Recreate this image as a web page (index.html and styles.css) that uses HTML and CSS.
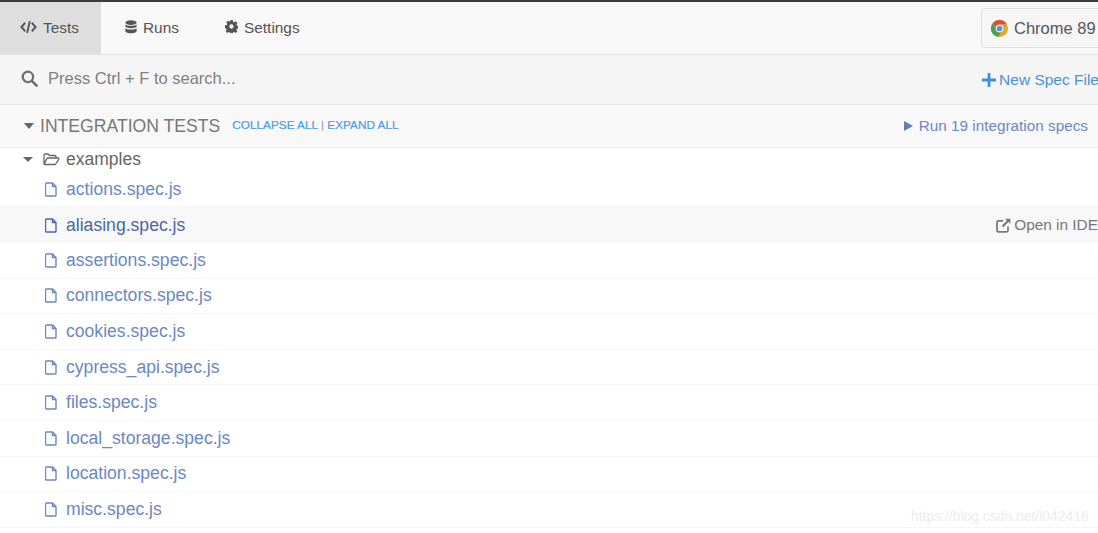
FILE: index.html
```html
<!DOCTYPE html>
<html lang="en">
<head>
<meta charset="utf-8">
<title>Cypress Tests</title>
<link rel="stylesheet" href="styles.css">
</head>
<body>
<div class="app">
  <nav class="nav">
    <a class="tab active">
      <svg class="ico-code" viewBox="0 0 18 14"><path d="M5.500 2.500 1.500 7l4 4.500M12.500 2.500l4 4.500-4 4.500M10.400 .8 7.600 13.200" fill="none" stroke="#555" stroke-width="2"/></svg>
      <span>Tests</span>
    </a>
    <a class="tab">
      <svg class="ico-db" viewBox="0 0 12 14"><ellipse cx="6" cy="2.600" rx="5.600" ry="2.400" fill="#555"/><path d="M.4 4.400C1.500 6.200 10.500 6.200 11.600 4.400v2.400C10.500 8.600 1.500 8.600.4 6.800zM.4 8.200C1.500 10 10.500 10 11.600 8.200v3.200C10.500 13.800 1.500 13.800.4 11.400z" fill="#555"/></svg>
      <span>Runs</span>
    </a>
    <a class="tab">
      <svg class="ico-gear" viewBox="0 0 14 14"><path fill-rule="evenodd" fill="#555" d="M5.700 0h2.600l.4 1.900 1.100.5 1.700-1 1.800 1.800-1 1.700.5 1.100 1.900.4v2.600l-1.900.4-.5 1.100 1 1.700-1.800 1.800-1.700-1-1.100.5-.4 1.900H5.700l-.4-1.900-1.100-.5-1.700 1-1.800-1.800 1-1.700-.5-1.100L0 8.300V5.700l1.900-.4.5-1.100-1-1.700L3.200.7l1.700 1 1.100-.5zM7 4.700a2.300 2.300 0 1 0 0 4.600 2.300 2.300 0 0 0 0-4.600z"/></svg>
      <span>Settings</span>
    </a>
    <div class="browser">
      <svg class="ico-chrome" viewBox="0 0 16 16">
        <circle cx="8" cy="8" r="8" fill="#e0a92e"/>
        <path d="M8 0a8 8 0 0 1 7 4H8a4 4 0 0 0-3.700 2.500L1.600 3.100A8 8 0 0 1 8 0z" fill="#d9503f"/>
        <path d="M1.600 3.100 4.400 8A4 4 0 0 0 9 11.900L6.900 15.900A8 8 0 0 1 1.600 3.100z" fill="#4c9f53"/>
        <circle cx="8" cy="8" r="3.600" fill="#fff"/><circle cx="8" cy="8" r="2.700" fill="#5a8fe6"/>
      </svg>
      <span>Chrome 89</span>
    </div>
  </nav>

  <div class="search">
    <svg class="ico-search" viewBox="0 0 18 18"><circle cx="7.300" cy="7.300" r="5.500" fill="none" stroke="#6f6f6f" stroke-width="2.400"/><path d="m11.500 11.500 5 5" stroke="#6f6f6f" stroke-width="2.800" stroke-linecap="round"/></svg>
    <span class="placeholder">Press Ctrl + F to search...</span>
    <a class="new-spec"><svg class="ico-plus" viewBox="0 0 14 14"><path d="M7 0v14M0 7h14" stroke="#3f8fde" stroke-width="2.800"/></svg>New Spec File</a>
  </div>

  <header class="head">
    <i class="caret caret-lg"></i>
    <span class="head-title">INTEGRATION TESTS</span>
    <span class="head-links"><a>COLLAPSE ALL</a> <em>|</em> <a>EXPAND ALL</a></span>
    <a class="run"><i class="play"></i>Run 19 integration specs</a>
  </header>

  <div class="folder">
    <i class="caret"></i>
    <svg class="ico-folder" viewBox="0 0 17 13"><path d="M1 11.500V2.200C1 1.500 1.500 1 2.200 1h3l1.300 1.500h5.300c.7 0 1.200.5 1.200 1.200V5M1 11.500h11.300l3.500-5.200c.3-.6 0-1.300-.7-1.300H5c-.5 0-.9.200-1.200.6z" fill="none" stroke="#666" stroke-width="1.300" stroke-linejoin="round"/></svg>
    <span>examples</span>
  </div>

  <ul class="specs">
    <li class="spec"><svg class="ico-file" viewBox="0 0 12 15"><path d="M1.300 1h6.200L11 4.500v8.700c0 .5-.4.800-.8.800H1.300c-.4 0-.8-.3-.8-.8V1.800c0-.5.400-.8.800-.8zM7.500 1v3.500H11" fill="none" stroke="#6c87c4" stroke-width="1.400"/></svg><a>actions.spec.js</a></li>
    <li class="spec hover"><svg class="ico-file" viewBox="0 0 12 15"><path d="M1.300 1h6.200L11 4.500v8.700c0 .5-.4.800-.8.800H1.300c-.4 0-.8-.3-.8-.8V1.800c0-.5.400-.8.800-.8zM7.500 1v3.500H11" fill="none" stroke="#4a66a8" stroke-width="1.400"/></svg><a>aliasing.spec.js</a>
      <span class="ide"><svg class="ico-ide" viewBox="0 0 15 15"><path d="M12 8.500v4c0 .8-.6 1.300-1.300 1.300H2.300c-.7 0-1.300-.5-1.300-1.300V4.200c0-.7.600-1.300 1.300-1.300H7" fill="none" stroke="#777" stroke-width="1.700"/><path d="M9 .7h5.300V6L12.400 4.100 7.300 9.300 5.700 7.700l5.200-5.100z" fill="#777"/></svg>Open in IDE</span></li>
    <li class="spec"><svg class="ico-file" viewBox="0 0 12 15"><path d="M1.300 1h6.200L11 4.500v8.700c0 .5-.4.800-.8.800H1.300c-.4 0-.8-.3-.8-.8V1.800c0-.5.400-.8.800-.8zM7.500 1v3.500H11" fill="none" stroke="#6c87c4" stroke-width="1.400"/></svg><a>assertions.spec.js</a></li>
    <li class="spec"><svg class="ico-file" viewBox="0 0 12 15"><path d="M1.300 1h6.200L11 4.500v8.700c0 .5-.4.800-.8.800H1.300c-.4 0-.8-.3-.8-.8V1.800c0-.5.400-.8.800-.8zM7.500 1v3.500H11" fill="none" stroke="#6c87c4" stroke-width="1.400"/></svg><a>connectors.spec.js</a></li>
    <li class="spec"><svg class="ico-file" viewBox="0 0 12 15"><path d="M1.300 1h6.200L11 4.500v8.700c0 .5-.4.800-.8.800H1.300c-.4 0-.8-.3-.8-.8V1.800c0-.5.400-.8.800-.8zM7.500 1v3.500H11" fill="none" stroke="#6c87c4" stroke-width="1.400"/></svg><a>cookies.spec.js</a></li>
    <li class="spec"><svg class="ico-file" viewBox="0 0 12 15"><path d="M1.300 1h6.200L11 4.500v8.700c0 .5-.4.800-.8.800H1.300c-.4 0-.8-.3-.8-.8V1.800c0-.5.400-.8.800-.8zM7.500 1v3.500H11" fill="none" stroke="#6c87c4" stroke-width="1.400"/></svg><a>cypress_api.spec.js</a></li>
    <li class="spec"><svg class="ico-file" viewBox="0 0 12 15"><path d="M1.300 1h6.200L11 4.500v8.700c0 .5-.4.800-.8.800H1.300c-.4 0-.8-.3-.8-.8V1.800c0-.5.400-.8.800-.8zM7.500 1v3.500H11" fill="none" stroke="#6c87c4" stroke-width="1.400"/></svg><a>files.spec.js</a></li>
    <li class="spec"><svg class="ico-file" viewBox="0 0 12 15"><path d="M1.300 1h6.200L11 4.500v8.700c0 .5-.4.800-.8.800H1.300c-.4 0-.8-.3-.8-.8V1.800c0-.5.400-.8.800-.8zM7.500 1v3.500H11" fill="none" stroke="#6c87c4" stroke-width="1.400"/></svg><a>local_storage.spec.js</a></li>
    <li class="spec"><svg class="ico-file" viewBox="0 0 12 15"><path d="M1.300 1h6.200L11 4.500v8.700c0 .5-.4.800-.8.800H1.300c-.4 0-.8-.3-.8-.8V1.800c0-.5.400-.8.800-.8zM7.500 1v3.500H11" fill="none" stroke="#6c87c4" stroke-width="1.400"/></svg><a>location.spec.js</a></li>
    <li class="spec"><svg class="ico-file" viewBox="0 0 12 15"><path d="M1.300 1h6.200L11 4.500v8.700c0 .5-.4.800-.8.800H1.300c-.4 0-.8-.3-.8-.8V1.800c0-.5.400-.8.800-.8zM7.500 1v3.500H11" fill="none" stroke="#6c87c4" stroke-width="1.400"/></svg><a>misc.spec.js</a></li>
  </ul>
  <div class="watermark">https://blog.csdn.net/i042416</div>
</div>
</body>
</html>
```
FILE: styles.css
```css
* { box-sizing: border-box; }
html, body { margin: 0; height: 100%; overflow: hidden; background: #fff; }
body { font-family: "Liberation Sans", Arial, sans-serif; color: #555; }
.app { position: relative; width: 1098px; height: 533px; overflow: hidden; }

.nav { display: flex; align-items: stretch; height: 55px; background: #f8f8f8; border-top: 2px solid #3a3a40; border-bottom: 1px solid #e3e3e3; }
.tab { display: flex; align-items: center; gap: 6px; font-size: 15.400px; color: #555; padding: 0 20px; height: 52px; }
.tab.active { width: 101px; background: #dedede; }
.tab:nth-child(2) { padding: 0 0 0 24px; width: 104px; }
.tab:nth-child(3) { padding: 0 0 0 20px; }
.tab svg { margin-top: -3px; }
.ico-code { width: 17px; height: 14px; }
.ico-db { width: 12px; height: 14px; }
.ico-gear { width: 13px; height: 13px; }
.browser { display: flex; align-items: center; gap: 6px; margin-left: auto; width: 118px; height: 40px; margin-top: 6px; margin-right: -1px; padding-left: 9px; font-size: 16.500px; color: #555; white-space: nowrap; background: #f6f6f6; border: 1px solid #dfdfdf; border-radius: 4px 0 0 4px; flex: none; }
.ico-chrome { width: 17px; height: 17px; flex: none; }

.search { display: flex; align-items: center; height: 50px; background: #f5f5f5; border-bottom: 1px solid #e6e6e6; padding-left: 21px; white-space: nowrap; }
.ico-search { width: 17px; height: 17px; margin-right: 10px; margin-top: -3px; }
.placeholder { font-size: 16.500px; color: #808080; margin-top: -2px; }
.new-spec { display: flex; align-items: center; gap: 3px; margin-left: auto; margin-right: -1px; font-size: 15.500px; color: #4a90dc; }
.ico-plus { width: 14px; height: 14px; }

.head { display: flex; align-items: center; height: 43px; background: #f8f8f8; border-bottom: 1px solid #efefef; padding-left: 24px; padding-right: 10px; white-space: nowrap; }
.caret { display: block; width: 0; height: 0; border-left: 5px solid transparent; border-right: 5px solid transparent; border-top: 5px solid #666; }
.caret-lg { border-left-width: 5.500px; border-right-width: 5.500px; border-top-width: 6px; }
.head-title { font-size: 17.600px; color: #777; margin-left: 6px; }
.head-links { font-size: 11.800px; color: #4f9ae6; margin-left: 12px; margin-top: -2px; -webkit-text-stroke: .2px #4f9ae6; }
.head-links em { font-style: normal; color: #999; -webkit-text-stroke: 0; }
.run { display: flex; align-items: center; margin-left: auto; font-size: 15.300px; color: #6c87c4; }
.play { width: 0; height: 0; border-left: 9px solid #5f7dbd; border-top: 5px solid transparent; border-bottom: 5px solid transparent; margin-right: 6px; }

.folder { display: flex; align-items: center; height: 23.800px; padding-left: 23px; font-size: 17.500px; color: #666; }
.ico-folder { width: 17px; height: 13px; margin-left: 10px; margin-right: 6px; }

.specs { list-style: none; margin: 0; padding: 0; }
.spec { display: flex; align-items: center; height: 35.600px; padding-left: 45px; font-size: 17.600px; color: #6c87c4; border-bottom: 1px solid #f6f6f6; }
.spec.hover { background: #f8f8f8; color: #4a66a8; border-bottom: 0; }
.ico-file { width: 12px; height: 15px; margin-right: 9px; flex: none; }
.ide { display: flex; align-items: center; gap: 3px; margin-left: auto; font-size: 15.400px; color: #777; }
.ico-ide { width: 15px; height: 15px; }

.watermark { position: absolute; left: 911px; top: 508px; font-size: 13.900px; color: #ececec; white-space: nowrap; }
```
